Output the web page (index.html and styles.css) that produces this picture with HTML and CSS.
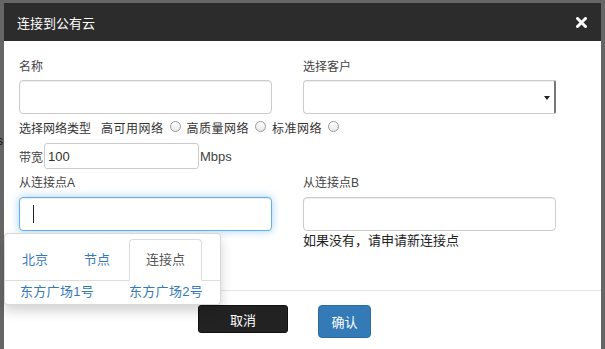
FILE: index.html
```html
<!DOCTYPE html>
<html lang="zh-CN">
<head>
    <meta charset="UTF-8">
    <title>连接到公有云</title>
    <link rel="stylesheet" href="styles.css">
</head>
<body>
    <div class="page">
        <span class="stray">s</span>
        <div class="modal">
            <div class="modal-header">
                <h4 class="modal-title">连接到公有云</h4>
                <svg class="close" width="11" height="11" viewBox="0 0 11 11">
                    <path d="M1.5 1.5 L9.5 9.5 M9.5 1.5 L1.5 9.5" stroke="#fff" stroke-width="3" stroke-linecap="round"/>
                </svg>
            </div>

            <div class="modal-body">
                <div class="row">
                    <div class="field">
                        <label>名称</label>
                        <input type="text" class="form-control">
                    </div>
                    <div class="field">
                        <label>选择客户</label>
                        <div class="form-control select"><span class="caret"></span></div>
                    </div>
                </div>

                <div class="radios">
                    <span class="radio-title">选择网络类型</span>
                    <span class="opt">高可用网络</span><span class="radio"></span>
                    <span class="opt">高质量网络</span><span class="radio"></span>
                    <span class="opt">标准网络</span><span class="radio"></span>
                </div>

                <div class="bandwidth">
                    <span>带宽</span>
                    <input type="text" class="bw-input" value="100">
                    <span class="unit">Mbps</span>
                </div>

                <div class="row row-points">
                    <div class="field">
                        <label>从连接点A</label>
                        <div class="form-control focus"><span class="cursor"></span></div>
                    </div>
                    <div class="field">
                        <label>从连接点B</label>
                        <input type="text" class="form-control">
                        <p class="hint">如果没有，请申请新连接点</p>
                    </div>
                </div>
            </div>

            <div class="modal-footer">
                <button class="btn btn-dark">取消</button>
                <button class="btn btn-primary">确认</button>
            </div>

            <div class="dropdown">
                <ul class="tabs">
                    <li><a>北京</a></li>
                    <li><a>节点</a></li>
                    <li class="active"><a>连接点</a></li>
                </ul>
                <div class="points">
                    <a>东方广场1号</a>
                    <a>东方广场2号</a>
                </div>
            </div>
        </div>
    </div>
</body>
</html>
```

FILE: styles.css
```css
* { box-sizing: border-box; }
body { margin: 0; background: #666; font-family: "Liberation Sans", "Noto Sans CJK SC", sans-serif; color: #333; font-size: 12px; }
.page { position: relative; height: 349px; padding: 3px 4px 0 4px; overflow: hidden; }
.stray { position: absolute; left: -3px; top: 134px; font-size: 12px; color: #111; }
.modal { position: relative; background: white; height: 346px; }

.modal-header { height: 38px; background: #2c2c2c; display: flex; align-items: center; justify-content: space-between; padding: 0 14px 0 13px; }
.modal-title { margin: 0; color: white; font-size: 13px; font-weight: normal; }

.modal-body { height: 249px; padding: 18px 15px 0 15px; }
.row { display: grid; grid-template-columns: 253px 253px; column-gap: 31px; }
label { display: block; line-height: 17px; margin-bottom: 4px; color: #444; }
.form-control { display: block; width: 100%; height: 34px; border: 1px solid #ccc; border-radius: 4px; background: white; box-shadow: inset 0 1px 1px rgba(0,0,0,.075); font: inherit; }
.select { position: relative; border-right: 2px solid #777; border-radius: 4px 2px 2px 4px; }
.caret { position: absolute; right: 4px; top: 15px; border-left: 3px solid transparent; border-right: 3px solid transparent; border-top: 4px solid #222; }

.radios { display: flex; align-items: center; height: 18px; margin-top: 4px; color: #333; letter-spacing: 0.5px; }
.radio-title { margin-right: 10px; letter-spacing: 0; }
.opt { margin-right: 6px; }
.radio { width: 11px; height: 11px; border: 1px solid #999; border-radius: 50%; background: linear-gradient(#fff, #e8e8e8); margin-right: 6px; margin-top: -2px; }

.bandwidth { display: flex; align-items: center; height: 26px; margin-top: 7px; color: #444; }
.bw-input { width: 155px; height: 26px; margin-left: 1px; border: 1px solid #ccc; border-radius: 3px; padding: 0 3px; font: 13px "Liberation Sans", sans-serif; color: #333; }
.unit { margin-left: 1px; font-size: 13px; }

.row-points { margin-top: 6px; }
.row-points label { margin-bottom: 5px; }
.focus { position: relative; border-color: #66afe9; box-shadow: inset 0 1px 1px rgba(0,0,0,.075), 0 0 8px rgba(102,175,233,.6); }
.cursor { position: absolute; left: 13px; top: 7px; width: 1px; height: 18px; background: #222; }
.hint { margin: 1px 0 0 0; line-height: 18px; font-size: 13px; color: #222; }

.modal-footer { border-top: 1px solid #e5e5e5; padding: 14px 0 0 194px; display: flex; align-items: flex-start; gap: 30px; }
.btn { font: 13px "Liberation Sans", "Noto Sans CJK SC", sans-serif; color: white; border-radius: 3px; cursor: pointer; }
.btn-dark { width: 90px; height: 28px; background: #222; border: 1px solid #111; }
.btn-primary { width: 53px; height: 33px; background: #337ab7; border: 1px solid #2e6da4; border-radius: 4px; }

.dropdown { position: absolute; left: 0; top: 230px; width: 217px; height: 72px; background: white; border: 1px solid rgba(0,0,0,.15); border-radius: 4px; box-shadow: 0 6px 12px rgba(0,0,0,.175); }
.tabs { list-style: none; margin: 0; padding: 5px 0 0 0; display: flex; border-bottom: 1px solid #ddd; }
.tabs li { margin-right: 2px; margin-bottom: -1px; }
.tabs a { display: block; height: 42px; line-height: 40px; padding: 0 16px; border: 1px solid transparent; border-radius: 4px 4px 0 0; font-size: 13px; color: #337ab7; }
.tabs .active a { border-color: #ddd #ddd transparent; background: white; color: #555; }
.points { display: flex; padding-left: 15px; line-height: 22px; }
.points a { flex: 0 0 109px; font-size: 13px; color: #337ab7; white-space: nowrap; letter-spacing: 0.3px; }
```
